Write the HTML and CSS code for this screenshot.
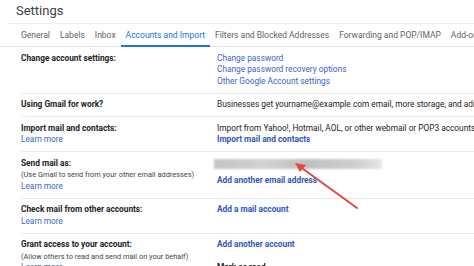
FILE: index.html
```html
<!DOCTYPE html>
<html lang="en">
<head>
  <meta charset="UTF-8" />
  <title>Settings</title>
  <link rel="stylesheet" href="styles.css">
</head>
<body>

  <h1 class="page-title">Settings</h1>

  <!-- Tabs -->
  <div class="tabs">
    <span class="tab">General</span>
    <span class="tab">Labels</span>
    <span class="tab">Inbox</span>
    <span class="tab active">Accounts and Import</span>
    <span class="tab">Filters and Blocked Addresses</span>
    <span class="tab">Forwarding and POP/IMAP</span>
    <span class="tab">Add-ons</span>
  </div>

  <div class="settings">
    <div class="row">
      <div class="label">Change account settings:</div>
      <div class="value">
        <a class="link">Change password</a>
        <a class="link">Change password recovery options</a>
        <a class="link">Other Google Account settings</a>
      </div>
    </div>

    <div class="row">
      <div class="label">Using Gmail for work?</div>
      <div class="value">
        <span>Businesses get yourname@example.com email, more storage, and admin tools with G Suite.</span>
      </div>
    </div>

    <div class="row">
      <div class="label">Import mail and contacts:<a class="link">Learn more</a></div>
      <div class="value">
        <span>Import from Yahoo!, Hotmail, AOL, or other webmail or POP3 accounts.</span>
        <a class="link strong">Import mail and contacts</a>
      </div>
    </div>

    <div class="row">
      <div class="label">Send mail as:
        <span class="hint">(Use Gmail to send from your other email addresses)</span>
        <a class="link">Learn more</a>
      </div>
      <div class="value">
        <div class="blurred"></div>
        <a class="link strong">Add another email address</a>
      </div>
    </div>

    <div class="row">
      <div class="label">Check mail from other accounts:<a class="link">Learn more</a></div>
      <div class="value">
        <a class="link strong">Add a mail account</a>
      </div>
    </div>

    <div class="row">
      <div class="label">Grant access to your account:
        <span class="hint">(Allow others to read and send mail on your behalf)</span>
        <a class="link">Learn more</a>
      </div>
      <div class="value">
        <a class="link strong">Add another account</a>
        <span class="sub-title">Mark as read</span>
      </div>
    </div>
  </div>

  <!-- nuoli kuvakaappauksen päällä -->
  <svg class="arrow" width="474" height="266" viewBox="0 0 474 266">
    <line x1="357" y1="208" x2="299" y2="166" stroke="#de4a40" stroke-width="2" stroke-linecap="round" />
    <polygon points="295,163 306,165 300,172" fill="#de4a40" />
  </svg>

</body>
</html>
```

FILE: styles.css
```css
body {
  margin: 0;
  background: #fff;
  font-family: Roboto, Arial, sans-serif;
  color: #222;
  overflow: hidden;
  width: 474px;
  height: 266px;
  position: relative;
}

.page-title {
  margin: 0 0 0 8px;
  padding: 3px 0 0 8px;
  height: 20px;
  font-size: 13px;
  font-weight: normal;
  color: #3c4043;
  border-bottom: 1px solid #eee;
}

.tabs {
  display: flex;
  white-space: nowrap;
  padding-left: 16px;
  height: 22px;
  border-bottom: 1px solid #e6e6e6;
}

.tab {
  padding: 0 5px;
  font-size: 8.5px;
  line-height: 22px;
  color: #5f6368;
  border-bottom: 2px solid transparent;
  margin-bottom: -1px;
}

.tab.active {
  color: #1a73e8;
  border-bottom-color: #1a73e8;
}

.settings {
  margin-left: 21px;
}

.row {
  display: flex;
  padding: 5.5px 0;
  border-bottom: 1px solid #eaeaea;
  font-size: 8.3px;
  line-height: 11.5px;
  white-space: nowrap;
}

.label {
  width: 196px;
  flex-shrink: 0;
  font-weight: bold;
  display: flex;
  flex-direction: column;
}

.value {
  display: flex;
  flex-direction: column;
}

.link {
  color: #3b63c9;
  font-weight: normal;
}

.link.strong {
  font-weight: bold;
  color: #2f56c2;
}

.hint {
  font-weight: normal;
  font-size: 7.4px;
  color: #444;
}

.sub-title {
  font-weight: bold;
  margin-top: 11px;
}

.blurred {
  width: 168px;
  height: 10px;
  margin: 1px 0 6px -3px;
  background: linear-gradient(to right, #c4c4c4 0%, #d2d2d2 30%, #c0c0c0 55%, #cfcfcf 85%, #e6e6e6 100%);
  filter: blur(0.8px);
}

.arrow {
  position: absolute;
  left: 0;
  top: 0;
  pointer-events: none;
}
```
